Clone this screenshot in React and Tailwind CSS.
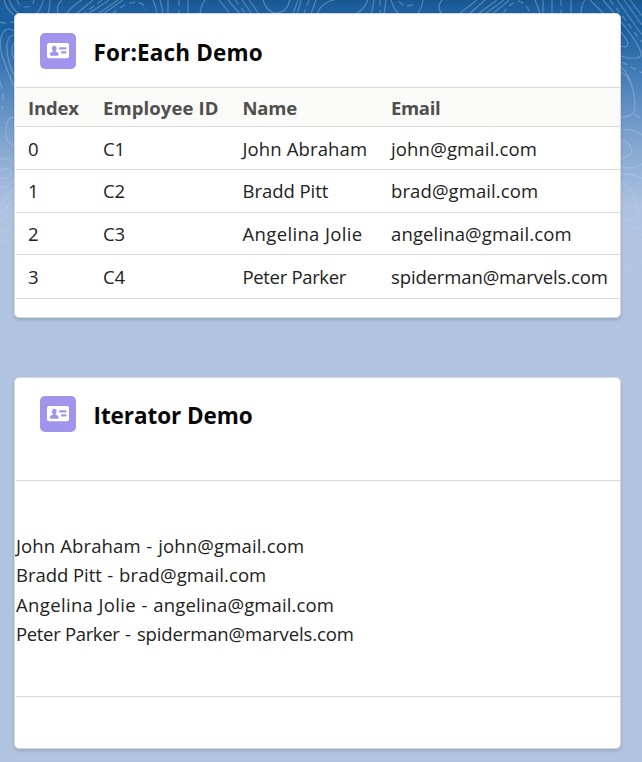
const employees = [
  { id: 'C1', name: 'John Abraham', email: 'john@gmail.com', row: 'h-[43px] pt-0.5', nameTracking: 'tracking-[0.13px]', emailTracking: 'tracking-[0.16px]' },
  { id: 'C2', name: 'Bradd Pitt', email: 'brad@gmail.com', row: 'h-[43px]', nameTracking: 'tracking-[-0.05px]', emailTracking: 'tracking-[0.1px]' },
  { id: 'C3', name: 'Angelina Jolie', email: 'angelina@gmail.com', row: 'h-[42px]', nameTracking: 'tracking-[0.35px]', emailTracking: 'tracking-[0.13px]' },
  { id: 'C4', name: 'Peter Parker', email: 'spiderman@marvels.com', row: 'h-[44px]', nameTracking: 'tracking-[-0.33px]', emailTracking: 'tracking-[-0.13px]' },
];

function Contours() {
  return (
    <svg className="absolute inset-0 h-[300px] w-full" viewBox="0 0 642 300" fill="none" stroke="#b9d4f0" strokeOpacity="0.36" strokeWidth="1.2">
      <path d="M4 0Q6 9 14 15M9 0Q12 9 19 14M43 0Q42 8 36 14M50 0Q50 8 48 14M62 0Q56 5 58 14M82 0Q73 5 66 14M93 0L76 14M109 0L88 14M118 0L98 14M123 0L103 14M153 0Q156 6 157 14M160 0Q162 6 163 14M168 0V14M188 0V14M205 0Q201 5 200 14" />
      <path d="M219 0L230 14M228 0L240 14M242 0L252 14M249 0L259 14M263 0Q267 13 277 13Q287 12 290 0M298 0L293 14M301 0L297 14M316 0L311 14M317 14Q322 2 334 0M368 0Q364 10 355 14M374 0Q373 8 371 14M386 0L384 14M391 0Q394 10 399 14M423 0Q422 9 417 14" />
      <path d="M17 0Q19 7 26 7Q33 7 34 0M0 22Q8 25 17 20M102 0L83 14M112 14Q126 2 137 2Q144 3 146 10M179 0V14M235 0L246 14M309 0L304 14M380 0V14M399 1Q405 10 415 3M503 14Q509 3 519 1Q528 5 530 14M561 0V14" strokeDasharray="6 4" />
      <path d="M442 14Q436 7 442 0M459 14L477 0M469 14L485 0M478 14L497 0M485 14L504 0M492 14Q504 5 509 0M535 0Q538 7 540 14M543 0V14M552 0V14M571 0V14M581 14Q581 5 585 0" />
      <path d="M590 0L612 22Q632 43 627 46Q625 48 621 46M603 0Q636 38 641 52Q642 58 636 58Q628 59 621 56M617 0L642 35M624 0L642 25M630 0L642 16M621 67Q629 73 633 90M621 72Q635 79 635 110M634 114L640 118M635 110Q632 117 621 117" />
      <path d="M610 0L642 42M622 62L642 73" strokeDasharray="6 4" />
      <path d="M621 130Q633 128 642 135M621 140Q632 143 632 150Q632 155 621 159M621 167Q635 170 642 164M621 174Q630 173 642 178M621 183Q632 185 637 204Q644 219 621 222M621 228Q634 231 642 225" />
      <path d="M621 234Q635 229 642 235M621 239Q632 240 632 250Q629 255 621 257M621 272Q632 270 642 263" strokeDasharray="6 4" />
      <path d="M14 31Q5 25 1 37Q-1 50 4 61Q7 70 14 87M14 35Q8 35 7 45Q6 58 14 75M14 43Q10 50 14 59M14 117Q6 118 6 131Q5 143 14 145M0 159Q10 157 14 165M0 171Q7 166 11 171Q13 176 6 178Q2 179 0 177M0 187Q11 188 14 179M0 205L14 188M0 213L14 199M0 222L14 210M0 232Q10 229 14 224M0 241Q9 243 14 236" />
      <path d="M0 82Q5 94 2 109" strokeDasharray="7 5" />
      <path d="M8 285Q9 274 14 270" strokeOpacity="0.2" />
    </svg>
  );
}

function ContactIcon() {
  return (
    <svg className="size-9 shrink-0" viewBox="0 0 36 36">
      <rect width="36" height="36" rx="5" fill="#a094ed" />
      <rect x="7" y="10" width="22" height="15.2" rx="2" fill="#fff" />
      <g fill="#a094ed">
        <ellipse cx="14.3" cy="15.4" rx="2.3" ry="2.7" />
        <path d="M13.2 17h2.2v1.6c1.6.7 3.2 1.2 3.2 3 0 .8-.3 1.2-1 1.2H11c-.8 0-1.1-.4-1.1-1.2 0-1.8 1.8-2.3 3.3-3z" />
        <rect x="19" y="14.3" width="7.5" height="2.2" rx="1" />
        <rect x="21" y="18.3" width="5.5" height="2.3" rx="1" />
      </g>
    </svg>
  );
}

function CardHeader({ title, className, spacing }) {
  return (
    <header className={`flex items-start pl-[25px] ${className}`}>
      <ContactIcon />
      <h2 className={`ml-[17.5px] mt-1 text-[22.5px] leading-[32px] font-bold text-[#080707] ${spacing}`}>{title}</h2>
    </header>
  );
}

const cardStyle = 'relative ml-[14px] w-[607px] overflow-hidden rounded-[5px] border border-[#d8d8d8] bg-white shadow-[0_2px_3px_rgba(0,0,0,0.14)]';
const columns = 'grid grid-cols-[75px_139.5px_148.5px_1fr] items-center border-b border-[#d8d8d8] pl-3';

export default function App() {
  return (
    <main className="relative h-[762px] w-[642px] overflow-hidden bg-[linear-gradient(180deg,#19568f_0px,#1b5f9f_8px,#1b5f9f_28px,#5286bd_90px,#84a6d0_145px,#adc2e0_205px,#b0c4df_250px)] pt-[13px] font-['Open_Sans','Noto_Sans',sans-serif] text-[18.5px] text-[#222222]">
      <Contours />
      <section className={`${cardStyle} h-[305px]`}>
        <CardHeader title="For:Each Demo" className="h-[73px] pt-[19px]" spacing="tracking-[0.16px]" />
        <div className="ml-px border-t border-[#d8d8d8]">
          <div className={`${columns} h-[39px] bg-[#fafaf9] pt-0.5 font-bold text-[#514f4d]`}>
            <span className="tracking-[-0.15px]">Index</span>
            <span className="tracking-[0.1px]">Employee ID</span>
            <span className="tracking-[-0.2px]">Name</span>
            <span className="tracking-[-0.35px]">Email</span>
          </div>
          {employees.map((employee, index) => (
            <div key={employee.id} className={`${columns} ${employee.row} whitespace-nowrap`}>
              <span>{index}</span>
              <span className="tracking-[-0.2px]">{employee.id}</span>
              <span className={employee.nameTracking}>{employee.name}</span>
              <span className={employee.emailTracking}>{employee.email}</span>
            </div>
          ))}
        </div>
      </section>
      <section className={`${cardStyle} mt-[59px] h-[372px]`}>
        <CardHeader title="Iterator Demo" className="h-[102px] pt-[18px]" spacing="tracking-[-0.07px]" />
        <div className="ml-px h-[217px] border-y border-[#d8d8d8] pt-[50px]">
          <ul className="leading-[29.4px]">
            {employees.map((employee) => (
              <li key={employee.id}>
                <span className={employee.nameTracking}>{employee.name}</span>
                <span className="tracking-[0.6px]"> - </span>
                <span className={employee.emailTracking}>{employee.email}</span>
              </li>
            ))}
          </ul>
        </div>
      </section>
    </main>
  );
}
